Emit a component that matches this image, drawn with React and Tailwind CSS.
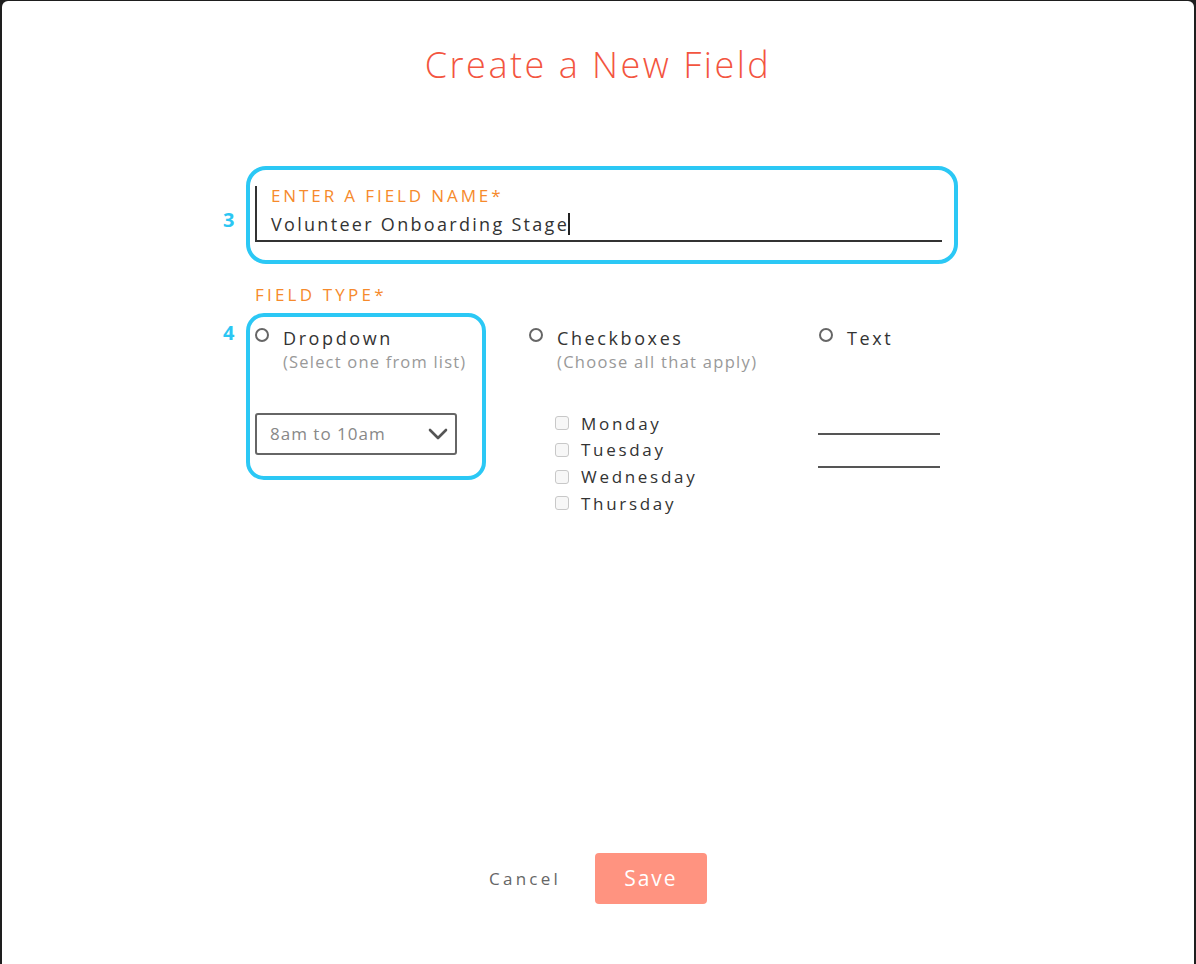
import { useState } from 'react';

const FONT = { fontFamily: '"Open Sans", "Noto Sans", Arial, sans-serif' };
const DAYS = ['Monday', 'Tuesday', 'Wednesday', 'Thursday'];

function Radio() {
  return <span className="block w-[14px] h-[14px] rounded-full border-2 border-[#666] bg-white shrink-0" />;
}

function Marker({ n }) {
  return <div className="w-[26px] shrink-0 pl-[3px] text-[20px] font-bold text-[#2bc6f3] leading-none">{n}</div>;
}

export default function App() {
  const [name] = useState('Volunteer Onboarding Stage');

  return (
    <div className="min-h-[964px] bg-[#1e1e1e] pt-[1px] px-[2px] overflow-hidden" style={FONT}>
      <div className="h-[963px] bg-white rounded-t-[6px] flex flex-col">
        {/* Title */}
        <h1 className="mt-[40px] text-center text-[36px] leading-[48px] font-light tracking-[2.5px] text-[#f3553f]">
          Create a New Field
        </h1>

        <div className="ml-[218px] mt-[77px] flex flex-col">
          {/* Field name */}
          <div className="flex items-center">
            <div className="pt-[10px]"><Marker n="3" /></div>
            <div className="w-[712px] h-[98px] border-4 border-[#2bc8f5] rounded-[20px] pl-[5px] pr-[12px] pt-[17px]">
              <div className="h-[56px] border-l-2 border-b-2 border-[#333] pl-[14px]">
                <div className="-mt-[1px] text-[17px] leading-[20px] tracking-[2.9px] text-[#f68a2c]">ENTER A FIELD NAME*</div>
                <div className="mt-[6px] text-[18px] leading-[24px] tracking-[2.3px] text-[#333] flex items-center">
                  <span>{name}</span>
                  <span className="inline-block w-[2px] h-[22px] bg-[#222] -ml-[1px]" />
                </div>
              </div>
            </div>
          </div>

          {/* Field type */}
          <div className="ml-[35px] mt-[20px] text-[17px] leading-[22px] tracking-[3.2px] text-[#f68a2c]">FIELD TYPE*</div>

          <div className="mt-[7px] flex items-start">
            <div className="pt-[10px]"><Marker n="4" /></div>

            {/* Dropdown */}
            <div className="w-[240px] h-[167px] border-4 border-[#2bc8f5] rounded-[18px] pl-[5px] pt-[11px]">
              <div className="flex items-start gap-[14px]">
                <Radio />
                <div>
                  <div className="text-[18px] leading-[20px] tracking-[2.6px] text-[#333]">Dropdown</div>
                  <div className="mt-[4px] text-[16.5px] leading-[20px] tracking-[1.2px] text-[#999]">(Select one from list)</div>
                </div>
              </div>
              <div className="mt-[41px] w-[202px] h-[42px] border-2 border-[#666] rounded-[3px] flex items-center justify-between pl-[13px] pr-[7px]">
                <span className="text-[17px] tracking-[1px] text-[#888]">8am to 10am</span>
                <svg width="20" height="12" viewBox="0 0 20 12" fill="none">
                  <polyline points="2,2 10,10 18,2" stroke="#555" strokeWidth="2.6" strokeLinecap="round" strokeLinejoin="round" />
                </svg>
              </div>
            </div>

            {/* Checkboxes */}
            <div className="ml-[42px] w-[290px] pt-[15px]">
              <div className="flex items-start gap-[14px]">
                <div className="pl-[1px]"><Radio /></div>
                <div>
                  <div className="text-[18px] leading-[20px] tracking-[2.6px] text-[#333]">Checkboxes</div>
                  <div className="mt-[4px] text-[16.5px] leading-[20px] tracking-[1.3px] text-[#999]">(Choose all that apply)</div>
                </div>
              </div>
              <div className="mt-[38px] pl-[27px] flex flex-col">
                {DAYS.map(d => (
                  <label key={d} className="flex items-center gap-[12px] h-[26.7px]">
                    <span className="block w-[14px] h-[14px] rounded-[3px] border border-[#c8c8c8] bg-[#f7f7f7]" />
                    <span className="text-[17px] tracking-[2.7px] text-[#333]">{d}</span>
                  </label>
                ))}
              </div>
            </div>

            {/* Text */}
            <div className="pt-[15px]">
              <div className="flex items-start gap-[14px] pl-[1px]">
                <Radio />
                <div className="text-[18px] leading-[20px] tracking-[2.6px] text-[#333]">Text</div>
              </div>
              <div className="mt-[85px] w-[122px] border-b-2 border-[#555]" />
              <div className="mt-[31px] w-[122px] border-b-2 border-[#555]" />
            </div>
          </div>
        </div>

        {/* Buttons */}
        <div className="mt-auto mb-[60px] flex items-center justify-center gap-[34px]">
          <button className="text-[17px] tracking-[3.2px] text-[#666]">Cancel</button>
          <button className="w-[112px] h-[51px] rounded-[4px] bg-[#ff9380] text-white text-[21px] tracking-[2px]">Save</button>
        </div>
      </div>
    </div>
  );
}
